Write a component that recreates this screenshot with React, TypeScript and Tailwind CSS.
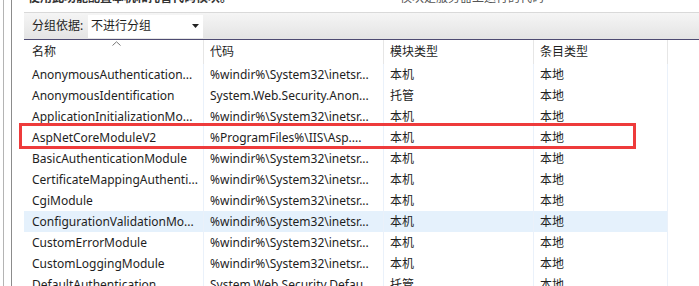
import React from "react";

const rows: [string, string, string, string][] = [
  ["AnonymousAuthentication...", "%windir%\\System32\\inetsr...", "本机", "本地"],
  ["AnonymousIdentification", "System.Web.Security.Anon...", "托管", "本地"],
  ["ApplicationInitializationMo...", "%windir%\\System32\\inetsr...", "本机", "本地"],
  ["AspNetCoreModuleV2", "%ProgramFiles%\\IIS\\Asp....", "本机", "本地"],
  ["BasicAuthenticationModule", "%windir%\\System32\\inetsr...", "本机", "本地"],
  ["CertificateMappingAuthenti...", "%windir%\\System32\\inetsr...", "本机", "本地"],
  ["CgiModule", "%windir%\\System32\\inetsr...", "本机", "本地"],
  ["ConfigurationValidationMo...", "%windir%\\System32\\inetsr...", "本机", "本地"],
  ["CustomErrorModule", "%windir%\\System32\\inetsr...", "本机", "本地"],
  ["CustomLoggingModule", "%windir%\\System32\\inetsr...", "本机", "本地"],
  ["DefaultAuthentication", "System.Web.Security.Defau...", "托管", "本地"],
];

const font = { fontFamily: '"Noto Sans", "Noto Sans CJK SC", sans-serif' };

export default function App() {
  return (
    <div
      className="relative flex h-[286px] w-[699px] overflow-hidden bg-white text-[12px] text-[#1e1e1e]"
      style={font}
    >
      {/* left frame lines */}
      <div className="flex h-full w-[24px] shrink-0">
        <div className="ml-[3px] h-full w-px bg-[#b4b4b4]" />
        <div className="ml-[7px] h-full w-px bg-[#8c8c8c]" />
      </div>
      <div className="flex min-w-0 flex-1 flex-col">
        {/* cut-off text row */}
        <div className="relative h-[12px] shrink-0 overflow-hidden">
          <div className="absolute left-[4px] top-[-10px] flex whitespace-nowrap text-[12px] leading-[16px]">
            <span className="w-[372px] font-bold text-[#333]">使用此功能配置本机和托管代码模块。</span>
            <span className="text-[#555]">模块是服务器上运行的代码</span>
          </div>
        </div>
        {/* toolbar */}
        <div className="flex h-[27px] shrink-0 items-center border-t border-[#d9d9d9] bg-gradient-to-b from-[#f5f5f5] to-[#e4e4e4]">
          <span className="ml-[8px] w-[56px] leading-none">分组依据:</span>
          <div className="flex h-[23px] w-[115px] items-center justify-between bg-white pl-[3px] pr-[4px]">
            <span className="leading-none">不进行分组</span>
            <svg width="7" height="4" viewBox="0 0 7 4">
              <path d="M0 0H7L3.5 4Z" fill="#222" />
            </svg>
          </div>
        </div>
        <div className="h-px shrink-0 bg-[#4e4b72]" />
        {/* header */}
        <div className="relative flex h-[24px] shrink-0 items-center">
          <svg className="absolute left-[88px] top-[1px]" width="9" height="5" viewBox="0 0 9 5">
            <path d="M0.5 4.5L4.5 0.8L8.5 4.5" fill="none" stroke="#777" strokeWidth="1" />
          </svg>
          <div className="flex h-full w-[180px] items-center border-r border-[#e6e6e6] pl-[8px]">名称</div>
          <div className="flex h-full w-[180px] items-center border-r border-[#e6e6e6] pl-[6px]">代码</div>
          <div className="flex h-full w-[150px] items-center border-r border-[#e6e6e6] pl-[6px]">模块类型</div>
          <div className="flex h-full w-[134px] items-center border-r border-[#e6e6e6] pl-[6px]">条目类型</div>
        </div>
        {/* rows */}
        <div className="relative flex shrink-0 flex-col">
          {rows.map((r, i) => (
            <div
              key={i}
              className={`flex h-[21px] w-[644px] shrink-0 items-center ${i === 7 ? "bg-[#e5f1fc]" : ""}`}
            >
              <div className="h-full w-[180px] overflow-hidden whitespace-nowrap border-r border-[#eaf1fa] pl-[8px] leading-[21px]">{r[0]}</div>
              <div className="h-full w-[180px] overflow-hidden whitespace-nowrap border-r border-[#eaf1fa] pl-[6px] leading-[21px]">{r[1]}</div>
              <div className="h-full w-[150px] overflow-hidden whitespace-nowrap border-r border-[#eaf1fa] pl-[6px] leading-[21px]">{r[2]}</div>
              <div className="h-full w-[134px] overflow-hidden whitespace-nowrap border-r border-[#eaf1fa] pl-[6px] leading-[21px]">{r[3]}</div>
            </div>
          ))}
          <div className="absolute left-[-5px] top-[59px] h-[26px] w-[617px] border-[3px] border-[#ee3b3b]" />
        </div>
      </div>
    </div>
  );
}
